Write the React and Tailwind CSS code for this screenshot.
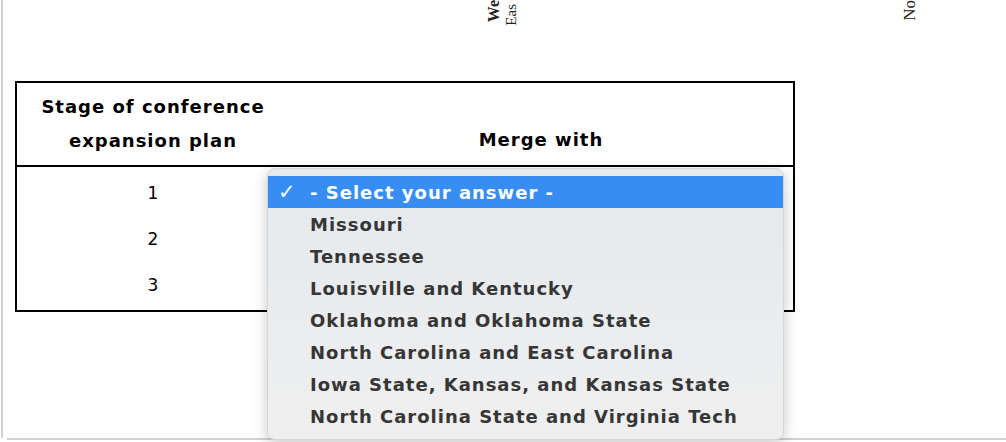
import React from "react";

const options = [
  "Missouri",
  "Tennessee",
  "Louisville and Kentucky",
  "Oklahoma and Oklahoma State",
  "North Carolina and East Carolina",
  "Iowa State, Kansas, and Kansas State",
  "North Carolina State and Virginia Tech",
];

function ChartLabels() {
  // bottom edge of the chart image above the table
  return (
    <div className="relative h-[79px] font-['Liberation_Serif',serif] text-[#222]">
      <span className="absolute left-[471px] top-[0px] [writing-mode:vertical-rl] rotate-180 text-[16px] font-bold leading-[16px]">
        We
      </span>
      <span className="absolute left-[489px] top-[4px] [writing-mode:vertical-rl] rotate-180 text-[15px] leading-[15px]">
        Eas
      </span>
      <span className="absolute left-[886px] top-[0px] [writing-mode:vertical-rl] rotate-180 text-[17px] leading-[17px]">
        No
      </span>
    </div>
  );
}

function SelectPopup() {
  return (
    <div className="absolute left-[267px] top-[168px] w-[517px] h-[272px] rounded-[8px] bg-gradient-to-b from-[#e4e9ed] to-[#efefef] border border-[#d6d6d6] shadow-[0_4px_14px_rgba(0,0,0,0.22)] pt-[7px] font-['DejaVu_Sans',sans-serif] font-bold text-[18px] tracking-[1px]">
      <div className="flex items-center h-[32px] bg-[#378df2] text-white">
        <span className="w-[42px] pl-[10px] text-[21px] font-bold leading-none">✓</span>
        <span>- Select your answer -</span>
      </div>
      {options.map((o) => (
        <div key={o} className="flex items-center h-[32px] pl-[42px] text-[#363636]">
          {o}
        </div>
      ))}
    </div>
  );
}

export default function App() {
  return (
    <div className="relative w-[1006px] h-[442px] bg-white overflow-hidden font-['DejaVu_Sans',sans-serif] text-black">
      <div className="ml-[1px] h-[438px] border-l-2 border-[#cfcfcf] pl-[12px]">
        <ChartLabels />
        <div className="mt-[2px] w-[780px] border-2 border-black">
          <div className="flex border-b-2 border-black h-[84px]">
            <div className="w-[272px] flex flex-col items-center justify-center text-[18px] tracking-[1px] font-bold leading-[34px]">
              <span>Stage of conference</span>
              <span>expansion plan</span>
            </div>
            <div className="flex-1 flex items-end justify-center pb-[8px] text-[18px] tracking-[1px] font-bold leading-[34px]">
              Merge with
            </div>
          </div>
          <div className="flex flex-col pt-[4px] pb-[1px]">
            {[1, 2, 3].map((n) => (
              <div key={n} className="flex h-[46px] items-center">
                <div className="w-[272px] text-center text-[17px]">{n}</div>
                <div className="flex-1" />
              </div>
            ))}
          </div>
        </div>
      </div>
      <div className="ml-[7px] h-[2px] bg-[#d0d0d0]" />
      <SelectPopup />
    </div>
  );
}
